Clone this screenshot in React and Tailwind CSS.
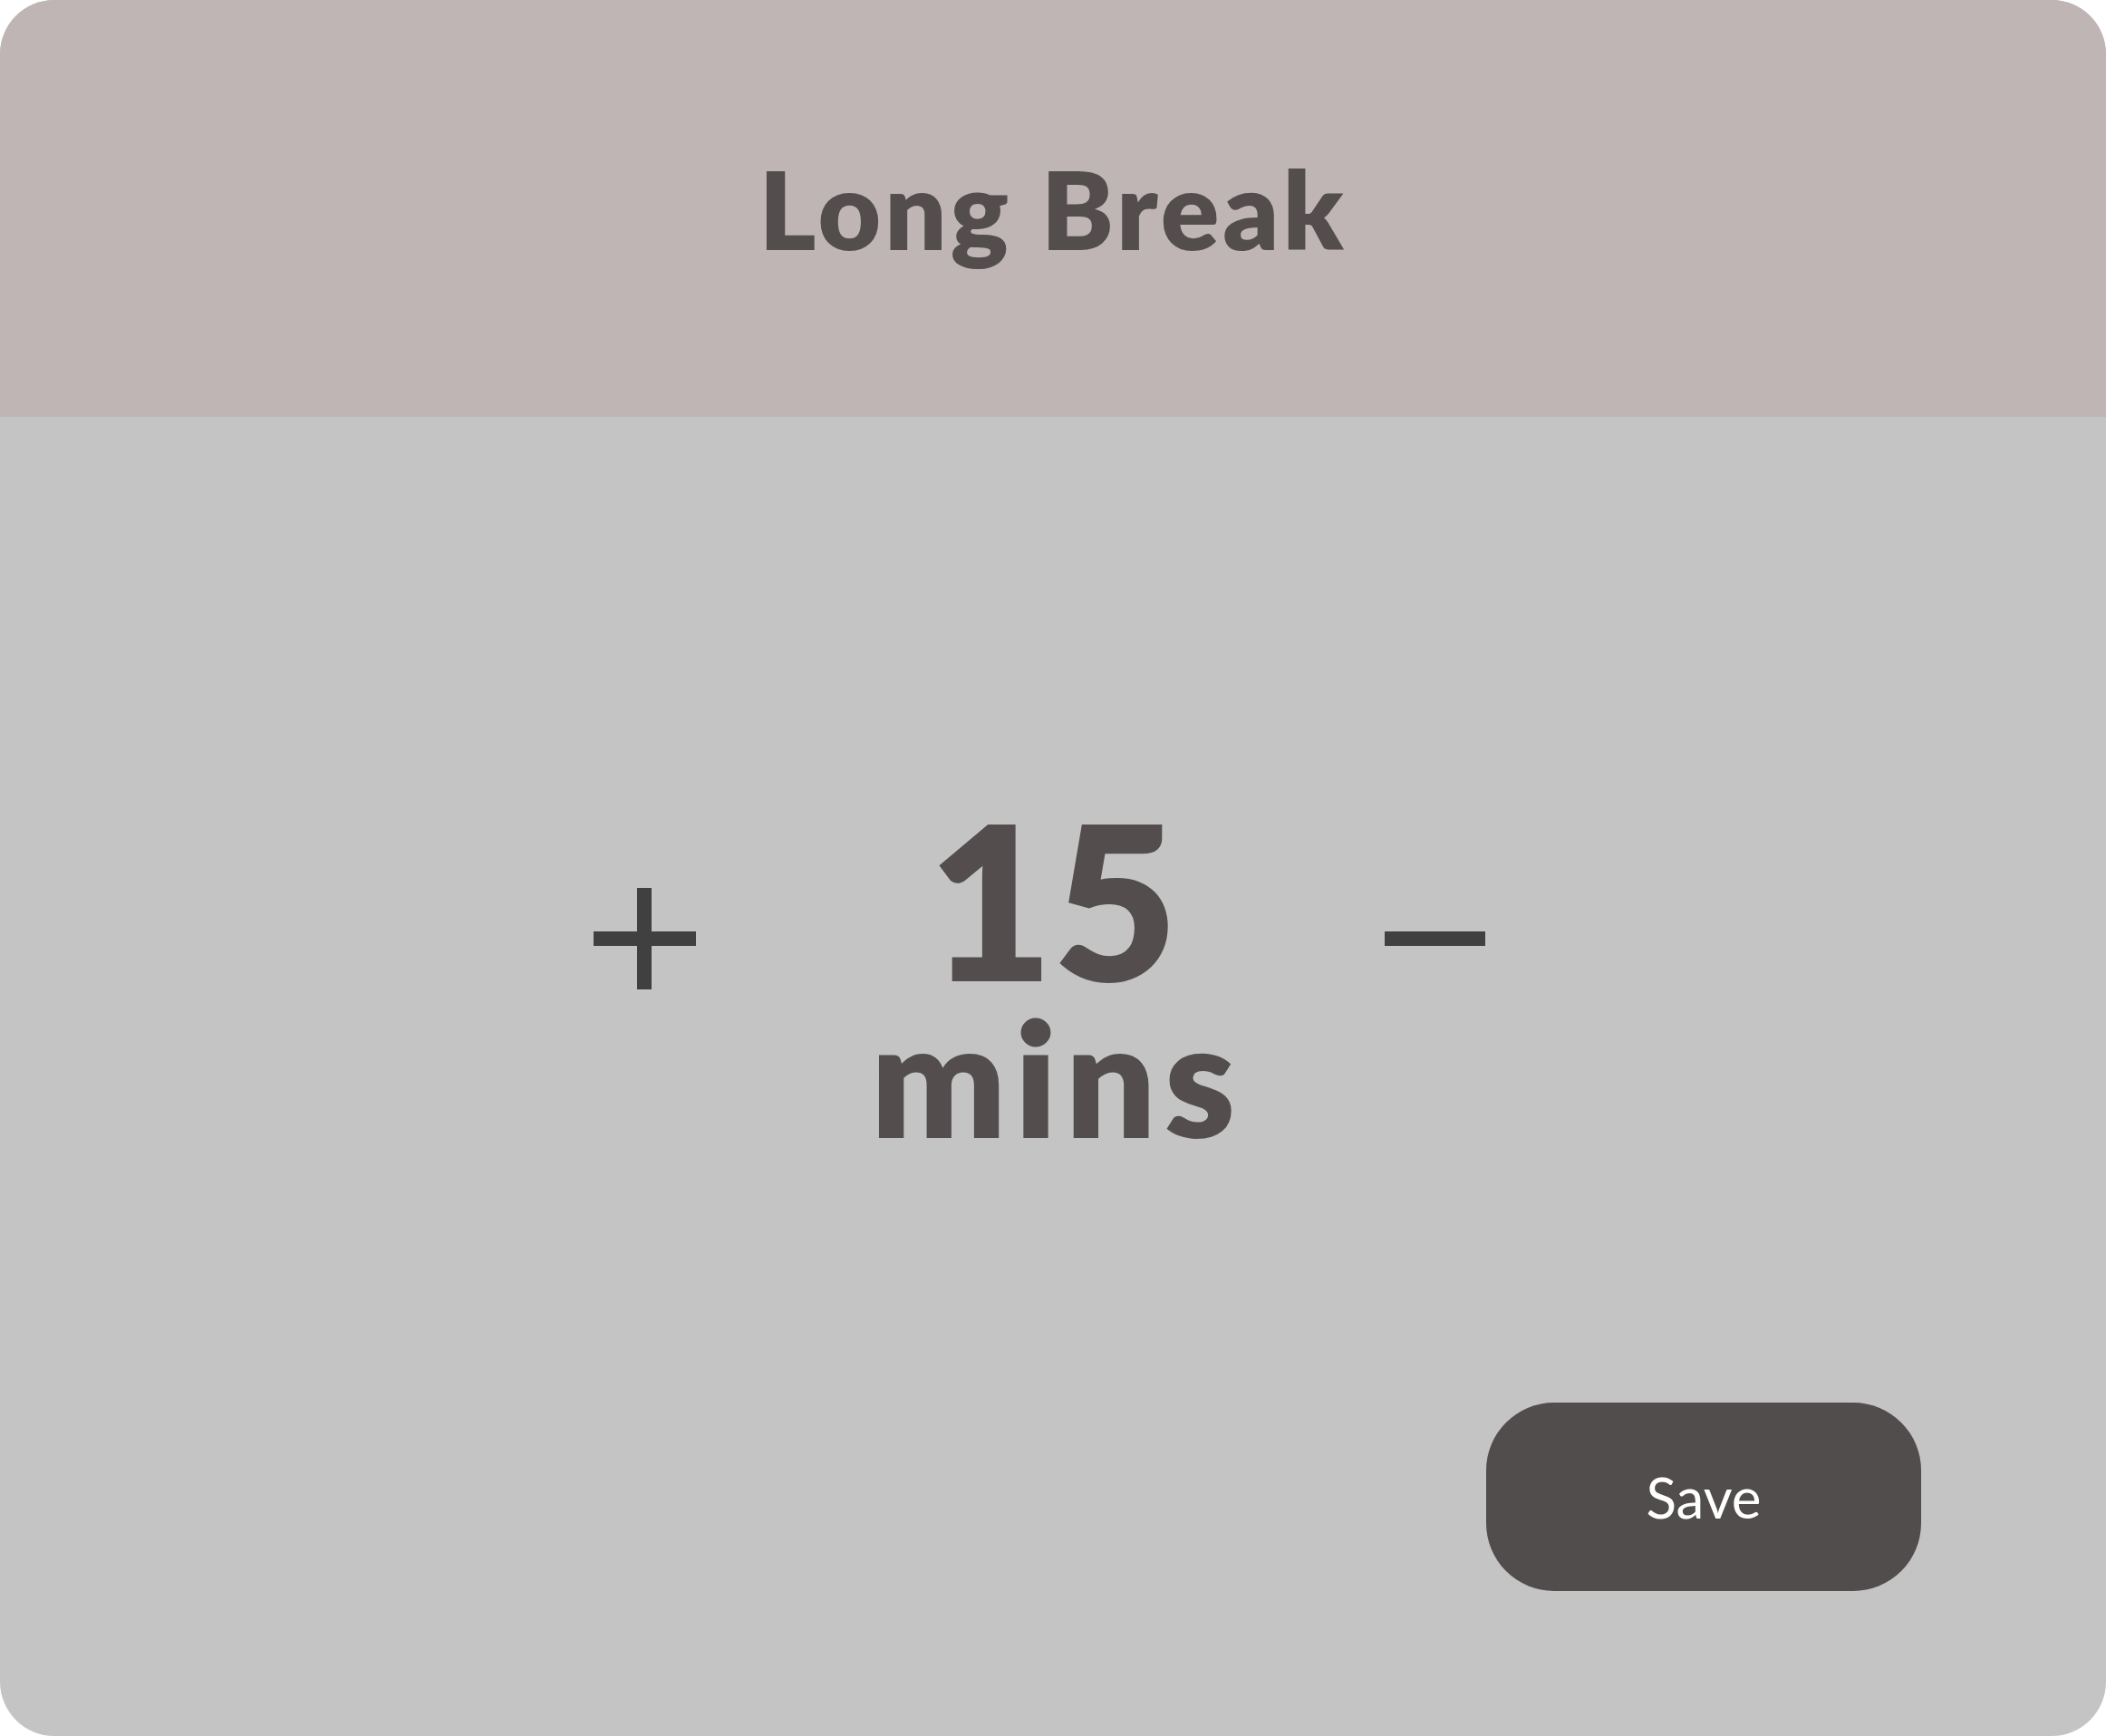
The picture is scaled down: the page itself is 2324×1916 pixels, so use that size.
import React from "react";

const font = { fontFamily: "Lato, 'Open Sans', sans-serif" };

// Plus / minus glyphs drawn as bars
const PlusIcon = () => (
  <svg width="113" height="112" viewBox="0 0 113 112" className="shrink-0 mt-[97px]">
    <rect x="48" y="0" width="16" height="112" fill="#404040" />
    <rect x="0" y="48" width="113" height="16" fill="#404040" />
  </svg>
);

const MinusIcon = () => (
  <svg width="111" height="112" viewBox="0 0 111 112" className="shrink-0 mt-[97px]">
    <rect x="0" y="48" width="111" height="16" fill="#404040" />
  </svg>
);

export default function App() {
  return (
    <div className="w-[2324px] h-[1916px] bg-white" style={font}>
      <div className="w-full h-full rounded-[60px] overflow-hidden flex flex-col bg-[#c4c4c4]">
        {/* header */}
        <div className="h-[460px] shrink-0 bg-[#bfb5b4] flex items-center justify-center">
          <h1 className="text-[120px] leading-none font-extrabold text-[#534d4d] tracking-[4px] font-['Lato']">
            Long Break
          </h1>
        </div>

        {/* timer */}
        <div className="flex-1 flex flex-col">
          <div className="flex justify-center items-start pt-[423px] pr-[30px]">
            <PlusIcon />
            <div className="ml-[199px] mr-[171px] w-[390px] flex flex-col items-center text-[#534d4d] font-['Lato'] font-extrabold">
              <span className="text-[237px] leading-[217px]">15</span>
              <span className="text-[176px] leading-none tracking-[9px] pl-[9px]">mins</span>
            </div>
            <MinusIcon />
          </div>

          <div className="mt-auto mb-[160px] flex justify-end pr-[204px]">
            <button className="w-[480px] h-[208px] rounded-[75px] bg-[#524d4d] text-white text-[62px] leading-none font-['Lato'] flex items-center justify-center">
              Save
            </button>
          </div>
        </div>
      </div>
    </div>
  );
}
